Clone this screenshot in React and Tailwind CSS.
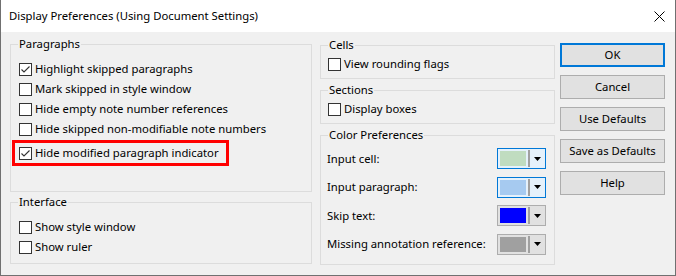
import React from "react";

const CheckBox = ({ checked }) => (
  <span className="w-[13px] h-[13px] shrink-0 border border-[#333333] bg-white flex items-center justify-center">
    {checked && (
      <svg width="11" height="11" viewBox="0 0 11 11">
        <path d="M1.5 5.5 L4 8 L9.5 2.5" fill="none" stroke="#333333" strokeWidth="1.1" />
      </svg>
    )}
  </span>
);

const CheckRow = ({ label, checked, className = "" }) => (
  <div className={`h-[20px] flex items-center gap-[3px] whitespace-nowrap ${className}`}>
    <CheckBox checked={checked} />
    <span className="leading-[16px]">{label}</span>
  </div>
);

const Group = ({ title, className = "", children }) => (
  <fieldset className={`border border-[#dcdcdc] ${className}`}>
    <legend className="ml-[7px] px-[1px] leading-[16px]">{title}</legend>
    {children}
  </fieldset>
);

const ColorCombo = ({ color, active }) => (
  <div
    className={`w-[49px] h-[21px] shrink-0 flex items-center border ${
      active ? "border-[#0078d7] bg-[#e5f1fb]" : "border-[#adadad] bg-[#e1e1e1]"
    }`}
  >
    <span className="ml-[2px] w-[26px] h-[15px]" style={{ backgroundColor: color }} />
    <span className="ml-[2px] w-[2px] h-[17px] bg-[#a0a0a0]" />
    <span className="flex-1 flex items-center justify-center">
      <svg width="7" height="4" viewBox="0 0 7 4">
        <path d="M0 0 H7 L3.5 4 Z" fill="#000000" />
      </svg>
    </span>
  </div>
);

const DlgButton = ({ label, primary }) => (
  <div
    className={`h-[24px] flex items-center justify-center bg-[#e1e1e1] ${
      primary ? "border-2 border-[#0078d7]" : "border border-[#adadad]"
    }`}
  >
    {label}
  </div>
);

const colorRows = [
  { label: "Input cell:", color: "#c0dcc0", active: true },
  { label: "Input paragraph:", color: "#a6caf0", active: true },
  { label: "Skip text:", color: "#0000ff", active: false },
  { label: "Missing annotation reference:", color: "#a0a0a0", active: false },
];

export default function App() {
  return (
    <div
      className="w-[676px] h-[276px] flex flex-col border-x border-b border-[#707070] text-[11.3px] text-black overflow-hidden whitespace-nowrap"
      style={{ fontFamily: '"Noto Sans", "Open Sans", sans-serif' }}
    >
      {/* title bar */}
      <div className="h-[32px] shrink-0 bg-white flex items-center justify-between pl-[8px] pr-[10px]">
        <span className="leading-[16px]">Display Preferences (Using Document Settings)</span>
        <svg width="11" height="11" viewBox="0 0 11 11">
          <path d="M0.5 0.5 L10.5 10.5 M10.5 0.5 L0.5 10.5" stroke="#000000" strokeWidth="1" />
        </svg>
      </div>

      {/* body */}
      <div className="flex-1 bg-[#f0f0f0] flex pl-[9px] gap-[8px]">
        {/* left column */}
        <div className="w-[302px] flex flex-col pt-[4px] gap-[2px]">
          <Group title="Paragraphs" className="h-[156px]">
            <div className="pt-[7px] pl-[1px]">
              <CheckRow label="Highlight skipped paragraphs" checked className="pl-[7px]" />
              <CheckRow label="Mark skipped in style window" className="pl-[7px]" />
              <CheckRow label="Hide empty note number references" className="pl-[7px]" />
              <CheckRow label="Hide skipped non-modifiable note numbers" className="pl-[7px]" />
              <div className="mt-[1px] w-[217px] border-[3px] border-[#ff0000] pl-[4px]">
                <CheckRow label="Hide modified paragraph indicator" checked />
              </div>
            </div>
          </Group>
          <Group title="Interface" className="h-[70px]">
            <div className="pt-[7px] pl-[8px]">
              <CheckRow label="Show style window" />
              <CheckRow label="Show ruler" />
            </div>
          </Group>
        </div>

        {/* middle column */}
        <div className="w-[235px] flex flex-col pt-[5px] gap-[3px]">
          <Group title="Cells" className="h-[42px]">
            <div className="pt-[1px] pl-[7px]">
              <CheckRow label="View rounding flags" />
            </div>
          </Group>
          <Group title="Sections" className="h-[42px]">
            <div className="pt-[1px] pl-[7px]">
              <CheckRow label="Display boxes" />
            </div>
          </Group>
          <Group title="Color Preferences" className="h-[138px]">
            <div className="pt-[5px] pl-[6px] pr-[8px] flex flex-col gap-[7.5px]">
              {colorRows.map((row) => (
                <div key={row.label} className="h-[21px] flex items-center justify-between">
                  <span className="leading-[16px]">{row.label}</span>
                  <ColorCombo color={row.color} active={row.active} />
                </div>
              ))}
            </div>
          </Group>
        </div>

        {/* buttons */}
        <div className="w-[105px] ml-[-3px] pt-[11px] flex flex-col gap-[8px]">
          <DlgButton label="OK" primary />
          <DlgButton label="Cancel" />
          <DlgButton label="Use Defaults" />
          <DlgButton label="Save as Defaults" />
          <DlgButton label="Help" />
        </div>
      </div>
    </div>
  );
}
